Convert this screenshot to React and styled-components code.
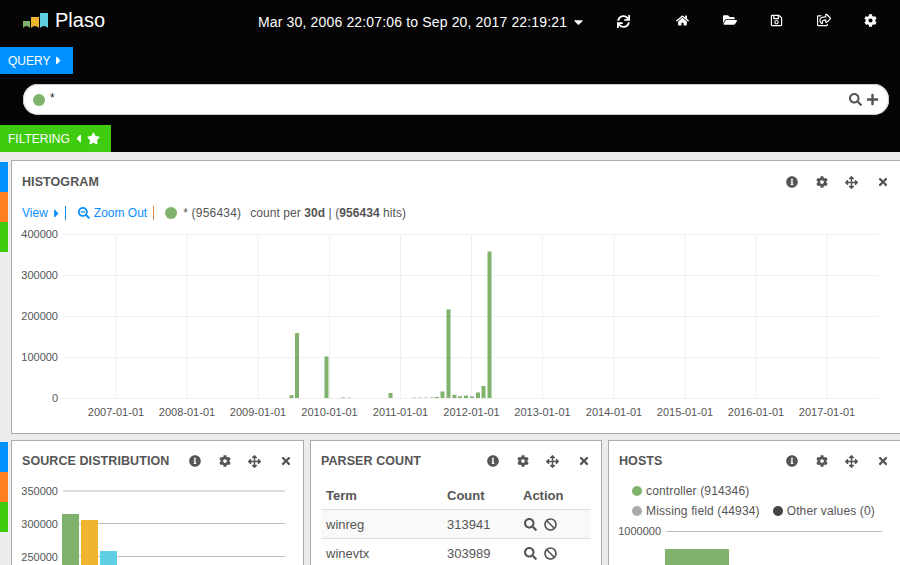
import React from 'react';
import styled, { createGlobalStyle } from 'styled-components';
import { FaSync, FaHome, FaFolderOpen, FaRegSave, FaRegShareSquare, FaCog, FaCaretRight, FaCaretLeft, FaCaretDown, FaStar, FaSearch, FaPlus, FaInfoCircle, FaArrowsAlt, FaTimes, FaBan, FaSearchMinus } from 'react-icons/fa';

const Global = createGlobalStyle`
  html, body { margin: 0; padding: 0; width: 900px; height: 565px; overflow: hidden; background: #ececec; }
  body { font-family: "Liberation Sans", Arial, sans-serif; font-size: 12px; color: #555; }
  * { box-sizing: border-box; }
`;

const Page = styled.div`width: 900px; height: 565px; overflow: hidden;`;
const Header = styled.header`background: #050505; height: 152px; display: flex; flex-direction: column; align-items: flex-start;`;
const Navbar = styled.nav`height: 47px; width: 100%; display: flex; align-items: flex-start; color: #fff;`;
const Brand = styled.div`width: 258px; padding: 9px 0 0 23px; display: flex; align-items: flex-start; gap: 7px; font-size: 20px; line-height: 23px;`;
const DateRange = styled.div`width: 342px; padding-top: 14px; display: flex; align-items: center; font-size: 14px; line-height: 16px; letter-spacing: .155px; gap: 7px; white-space: nowrap; svg { width: 9px; height: 14px; }`;
const NavIcon = styled.span`width: 47px; height: 47px; display: flex; justify-content: center; padding-top: ${p => p.$top}px; font-size: ${p => p.$size || 13}px; color: #fff; flex: none;`;
const Refresh = styled(NavIcon)`margin-right: 12px;`;
const TabLabel = styled.div`height: 27px; display: inline-flex; align-items: center; padding: 0 ${p => p.$pad}px 0 8px; color: #fff; font-size: 12px; background: ${p => p.$bg};`;
const CaretR = styled(FaCaretRight)`width: 5px; height: 13px; margin-left: ${p => p.$ml}px;`;
const CaretL = styled(FaCaretLeft)`width: 5px; height: 13px; margin-left: ${p => p.$ml}px;`;
const StarIcon = styled(FaStar)`width: 13px; height: 13px; margin-left: 6px;`;
const SearchRow = styled.div`height: 51px; width: 100%; padding: 10px 11px 10px 23px;`;
const SearchBar = styled.div`height: 31px; width: 100%; background: #fff; border-radius: 15px; display: flex; align-items: center; padding: 0 10px; box-shadow: inset 0 0 0 1px #ccc;`;
const Dot = styled.span`width: ${p => p.$d || 12}px; height: ${p => p.$d || 12}px; border-radius: 50%; background: ${p => p.$c}; flex: none;`;
const Query = styled.span`margin-left: 5px; color: #222; font-size: 12px; flex: 1; position: relative; top: -2px;`;
const SearchIcons = styled.span`display: flex; gap: 4px; color: #555; font-size: 13px; align-items: center;`;

const Row = styled.section`display: flex; margin-top: ${p => p.$mt}px; height: ${p => p.$h}px; width: 904px;`;
const Rail = styled.div`width: 8px; flex: none; margin: 2px 3px 0 0; display: flex; flex-direction: column;`;
const RailTab = styled.div`height: 30px; background: ${p => p.$c};`;
const Panels = styled.div`flex: 1; display: flex; gap: 6px; min-width: 0; align-items: stretch;`;
const Panel = styled.article`width: ${p => p.$w}px; flex: none; background: #fff; border: 1px solid #aaa; display: flex; flex-direction: column; overflow: hidden;`;
const PanelHead = styled.div`display: flex; justify-content: space-between; align-items: center; height: 38px; padding: 2px 10px 0 10px; flex: none;`;
const PanelHeadTall = styled(PanelHead)`height: 40px; padding-right: 11px;`;
const Title = styled.h3`margin: 0; font-size: 12.5px; letter-spacing: .08px; font-weight: bold; color: #555; line-height: 16px; white-space: nowrap;`;
const Tools = styled.div`display: flex; align-items: center;`;
const Tool = styled.span`width: 14px; margin-left: ${p => p.$ml || 0}px; display: flex; justify-content: center; font-size: ${p => p.$s || 12}px; color: #555;`;

const Info = styled.div`display: flex; align-items: center; height: 16px; margin: 4px 0 7px 10px; color: #555; font-size: 12px; white-space: nowrap;`;
const Lnk = styled.span`color: #0a8fff; display: inline-flex; align-items: center;`;
const ZoomIcon = styled(FaSearchMinus)`width: 12px; height: 12px; margin-right: 4px;`;
const Sep = styled.span`width: 1px; height: 14px; background: ${p => p.$c}; margin: 0 ${p => p.$r}px 0 ${p => p.$l}px;`;
const HitLabel = styled.span`margin-left: 6px; letter-spacing: .2px;`;
const CountLabel = styled.span`margin-left: 9px; letter-spacing: .07px;`;
const ChartSvg = styled.svg`display: block; flex: none; font-family: "Liberation Sans", Arial, sans-serif; font-size: 11px;`;

const Table = styled.table`border-collapse: collapse; margin: 0 0 0 10px; width: 270px; font-size: 13px; color: #555;`;
const Th = styled.th`text-align: left; font-weight: bold; height: 30px; padding: 4px 5px 0; border-bottom: 1px solid #ddd; width: ${p => p.$w}px;`;
const Td = styled.td`height: 29px; padding: 2px 5px 0; border-bottom: 1px solid #ddd; background: ${p => p.$odd ? '#f9f9f9' : '#fff'};`;
const Actions = styled.span`display: flex; gap: 7px; font-size: 13px; color: #555; padding-left: 1px;`;

const Legend = styled.div`padding: 2px 0 0 23px; font-size: 12px; letter-spacing: .14px; color: #555;`;
const LegendRow = styled.div`display: flex; align-items: center; height: 20px; gap: 4px;`;
const Gap = styled.span`width: 5px;`;

const Logo = () => (
  <svg width="25" height="16" viewBox="0 0 25 16" style={{ marginTop: 4 }}>
    <path d="M0 8h7v7q-1.700-2-3.500-2t-3.500 2z" fill="#7EB26D" />
    <path d="M8 4h8v11q-2-2-4-2t-4 2z" fill="#EFB52F" />
    <path d="M17 0h8v15q-2-2-4-2t-4 2z" fill="#5FCFE3" />
  </svg>
);

const PanelTools = () => (
  <Tools>
    <Tool><FaInfoCircle /></Tool>
    <Tool $ml={16}><FaCog /></Tool>
    <Tool $ml={15} $s={13}><FaArrowsAlt /></Tool>
    <Tool $ml={18}><FaTimes /></Tool>
  </Tools>
);

const BARS = [
  [289.5, 2.8], [295, 65], [324.5, 41.5], [341, 0.6], [347, 0.3], [388.5, 5], [412, .4], [418, .4], [424, .4], [430, .5], [435, 1], [440.5, 6.5], [446.5, 88.5], [452.5, 3.2], [458, 1.7], [464, 2.4], [470, 1.5], [476, 5.5], [481.5, 12], [487.5, 146.5],
];
const YEARS = [2007, 2008, 2009, 2010, 2011, 2012, 2013, 2014, 2015, 2016, 2017];
const YEAR_X = [116, 187, 258, 329.500, 400.500, 471.500, 542.500, 614, 685, 756, 827];

const Histogram = () => (
  <ChartSvg width="889" height="205" viewBox="12 228 889 205">
    {[234, 275, 316, 357, 398].map((y, i) => (
      <g key={y}>
        <line x1="63" x2="878" y1={y + .5} y2={y + .5} stroke="#f0f0f0" />
        <text x="58" y={y + 4} textAnchor="end" fill="#555">{(400000 - i * 100000) || 0}</text>
      </g>
    ))}
    {YEARS.map((yr, i) => (
      <g key={yr}>
        <line x1={YEAR_X[i]} x2={YEAR_X[i]} y1="234" y2="398" stroke="#f0f0f0" />
        <text x={YEAR_X[i]} y="416" textAnchor="middle" fill="#555">{yr}-01-01</text>
      </g>
    ))}
    {BARS.map(([x, h]) => <rect key={x} x={x} y={398 - h} width="4" height={h} fill="#7EB26D" />)}
  </ChartSvg>
);

const SourceChart = () => (
  <ChartSvg width="291" height="87" viewBox="12 479 291 87">
    {[[491, 350000], [523.500, 300000], [556.500, 250000]].map(([y, v]) => (
      <g key={v}>
        <line x1="63" x2="285" y1={y} y2={y} stroke="#bbb" />
        <text x="58" y={y + 4} textAnchor="end" fill="#555">{v}</text>
      </g>
    ))}
    <rect x="62" y="514" width="17" height="60" fill="#7EB26D" />
    <rect x="81" y="520" width="17" height="60" fill="#EFB52F" />
    <rect x="100" y="551" width="17" height="30" fill="#5FCFE3" />
  </ChartSvg>
);

const HostChart = () => (
  <ChartSvg width="291" height="45" viewBox="609 521 291 45">
    <line x1="666" x2="882" y1="531.500" y2="531.500" stroke="#bbb" />
    <text x="661" y="535" textAnchor="end" fill="#555">1000000</text>
    <rect x="665" y="549" width="64" height="30" fill="#7EB26D" />
  </ChartSvg>
);

export default function App() {
  return (
    <Page>
      <Global />
      <Header>
        <Navbar>
          <Brand><Logo />Plaso</Brand>
          <DateRange>Mar 30, 2006 22:07:06 to Sep 20, 2017 22:19:21 <FaCaretDown /></DateRange>
          <Refresh $top={15} $size={13}><FaSync /></Refresh>
          <NavIcon $top={14}><FaHome /></NavIcon>
          <NavIcon $top={13} $size={14}><FaFolderOpen /></NavIcon>
          <NavIcon $top={14}><FaRegSave /></NavIcon>
          <NavIcon $top={13} $size={14}><FaRegShareSquare /></NavIcon>
          <NavIcon $top={14}><FaCog /></NavIcon>
        </Navbar>
        <TabLabel $bg="#0090ff" $pad={12}>QUERY<CaretR $ml={6} /></TabLabel>
        <SearchRow>
          <SearchBar>
            <Dot $c="#7EB26D" />
            <Query>*</Query>
            <SearchIcons><FaSearch /><FaPlus /></SearchIcons>
          </SearchBar>
        </SearchRow>
        <TabLabel $bg="#3fcb10" $pad={11}>FILTERING<CaretL $ml={6} /><StarIcon /></TabLabel>
      </Header>

      <Row $mt={8} $h={274}>
        <Rail>
          <RailTab $c="#0090ff" /><RailTab $c="#ff8020" /><RailTab $c="#3fcb10" />
        </Rail>
        <Panels>
          <Panel $w={891}>
            <PanelHeadTall>
              <Title>HISTOGRAM</Title>
              <PanelTools />
            </PanelHeadTall>
            <Info>
              <Lnk>View<CaretR $ml={6} /></Lnk>
              <Sep $c="#0a8fff" $l={6} $r={12} />
              <Lnk><ZoomIcon />Zoom Out</Lnk>
              <Sep $c="#e08a4a" $l={6} $r={11} />
              <Dot $c="#7EB26D" />
              <HitLabel>* (956434)</HitLabel>
              <CountLabel>count per <b>30d</b> | (<b>956434</b> hits)</CountLabel>
            </Info>
            <Histogram />
          </Panel>
        </Panels>
      </Row>

      <Row $mt={6} $h={130}>
        <Rail>
          <RailTab $c="#0090ff" /><RailTab $c="#ff8020" /><RailTab $c="#3fcb10" />
        </Rail>
        <Panels>
          <Panel $w={293}>
            <PanelHead><Title>SOURCE DISTRIBUTION</Title><PanelTools /></PanelHead>
            <SourceChart />
          </Panel>
          <Panel $w={292}>
            <PanelHead><Title>PARSER COUNT</Title><PanelTools /></PanelHead>
            <Table>
              <thead><tr><Th $w={121}>Term</Th><Th $w={76}>Count</Th><Th>Action</Th></tr></thead>
              <tbody>
                <tr><Td $odd>winreg</Td><Td $odd>313941</Td><Td $odd><Actions><FaSearch /><FaBan /></Actions></Td></tr>
                <tr><Td>winevtx</Td><Td>303989</Td><Td><Actions><FaSearch /><FaBan /></Actions></Td></tr>
              </tbody>
            </Table>
          </Panel>
          <Panel $w={293}>
            <PanelHead><Title>HOSTS</Title><PanelTools /></PanelHead>
            <Legend>
              <LegendRow><Dot $d={10} $c="#7EB26D" />controller (914346)</LegendRow>
              <LegendRow><Dot $d={10} $c="#aaa" />Missing field (44934)<Gap /><Dot $d={10} $c="#444" />Other values (0)</LegendRow>
            </Legend>
            <HostChart />
          </Panel>
        </Panels>
      </Row>
    </Page>
  );
}
